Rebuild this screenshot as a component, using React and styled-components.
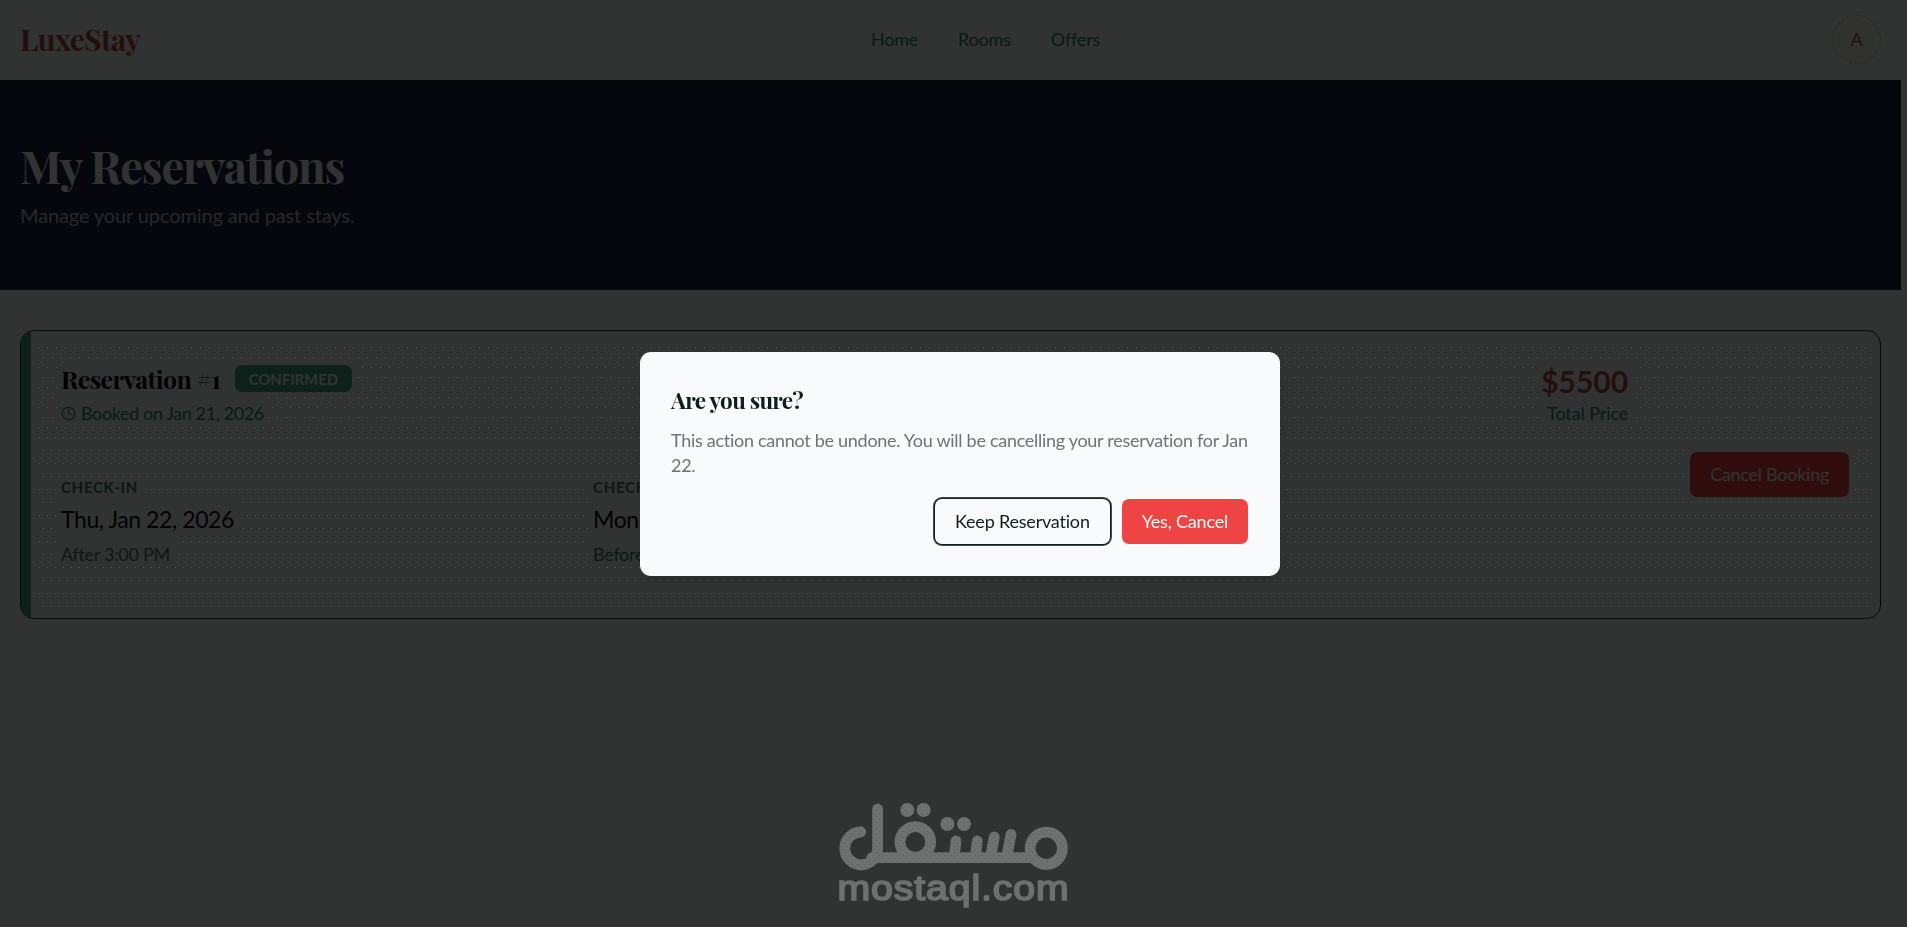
import React from 'react'
import styled, { createGlobalStyle } from 'styled-components'
import { Clock } from 'lucide-react'

const App = () => {
  return (
    <>
      <GlobalStyle />
      <Page>
        <Header>
          <Logo>LuxeStay</Logo>
          <Nav>
            <a>Home</a>
            <a>Rooms</a>
            <a>Offers</a>
          </Nav>
          <Avatar>A</Avatar>
        </Header>
        <Hero>
          <h1>My Reservations</h1>
          <p>Manage your upcoming and past stays.</p>
        </Hero>
        <Card>
          <StatusBar />
          <Details>
            <Top>
              <div>
                <TitleRow>
                  <h2>Reservation #1</h2>
                  <Badge>CONFIRMED</Badge>
                </TitleRow>
                <Booked>
                  <Clock size={15} strokeWidth={2} />
                  Booked on Jan 21, 2026
                </Booked>
              </div>
              <Price>
                <strong>$5500</strong>
                <span>Total Price</span>
              </Price>
            </Top>
            <Stay>
              <StayItem label='CHECK-IN' date='Thu, Jan 22, 2026' note='After 3:00 PM' />
              <StayItem label='CHECK-OUT' date='Mon, Jan 26, 2026' note='Before 11:00 AM' />
            </Stay>
          </Details>
          <Actions>
            <Button $danger $spacing='-0.27px'>
              Cancel Booking
            </Button>
          </Actions>
        </Card>
      </Page>
      <Overlay>
        <Grain />
        <Dialog>
          <h2>Are you sure?</h2>
          <p>
            This action cannot be undone. You will be cancelling your reservation for Jan 22.
          </p>
          <DialogFooter>
            <Button $focused>Keep Reservation</Button>
            <Button $danger>Yes, Cancel</Button>
          </DialogFooter>
        </Dialog>
      </Overlay>
      <Watermark>
        <WatermarkLogo />
      </Watermark>
    </>
  )
}

const StayItem = ({ label, date, note }) => (
  <StayBlock>
    <h4>{label}</h4>
    <strong>{date}</strong>
    <span>{note}</span>
  </StayBlock>
)

const WatermarkLogo = () => (
  <svg width='230' height='108' viewBox='0 0 230 108'>
    <defs>
      <pattern id='grain' width='6' height='6' patternUnits='userSpaceOnUse'>
        <rect width='6' height='6' fill='#6f7170' />
        <rect x='1' y='1' width='1' height='1' fill='#5c5e5d' />
        <rect x='4' y='4' width='1' height='1' fill='#5c5e5d' />
      </pattern>
    </defs>
    <g fill='none' stroke='url(#grain)' strokeWidth='10.8' strokeLinecap='round'>
      <path d='M21.8 29A16.400 16.400 0 1 0 38.600 45.200V6' />
      <path d='M33 54.600H192' />
      <circle cx='76.300' cy='39' r='15.300' />
      <circle cx='207.300' cy='45.300' r='16.100' />
      <path d='M117 38L115.500 52M138.300 38L136.500 52M155.300 34L152 52M172 31.500L168 52' />
    </g>
    <g fill='url(#grain)'>
      <circle cx='68.300' cy='7' r='7' />
      <circle cx='84.600' cy='7' r='7' />
      <circle cx='108.400' cy='21' r='7' />
      <circle cx='125' cy='21' r='7' />
      <text
        x='-1.500'
        y='96.500'
        textLength='232'
        lengthAdjust='spacingAndGlyphs'
        letterSpacing='0.8'
        fontFamily='"Liberation Sans", sans-serif'
        fontSize='35.500'
        stroke='#6f7170'
        strokeWidth='1.700'
        strokeLinejoin='round'
      >
        mostaql.com
      </text>
    </g>
  </svg>
)

export default App

const serif = '"Playfair Display", "Liberation Serif", serif'

const GlobalStyle = createGlobalStyle`
  * {
    box-sizing: border-box;
    margin: 0;
  }

  body {
    background: #f5fffa;
    color: #0c0d18;
    font: 18px/27px Lato, sans-serif;
    letter-spacing: -0.3px;
    overflow: hidden;
  }
`

const Page = styled.div`
  height: 927px;
  background: #f5fffa;
`

const Header = styled.header`
  display: flex;
  justify-content: space-between;
  align-items: center;
  height: 80px;
  padding: 0 26px 2px 20px;
`

const Logo = styled.div`
  font: bold 30px/40px ${serif};
  letter-spacing: -0.025em;
  color: #b44a40;
`

const Nav = styled.nav`
  display: flex;
  gap: 40px;
  padding-right: 1px;
  letter-spacing: -0.2px;
  color: #2f7d65;
`

const Avatar = styled.div`
  display: flex;
  align-items: center;
  justify-content: center;
  width: 49px;
  height: 49px;
  border: 1px dashed #c8bfbc;
  border-radius: 50%;
  background: #f2f2ee;
  color: #b44a40;
`

const Hero = styled.section`
  width: 1901px;
  height: 210px;
  padding: 58px 20px 0;
  background: #1e2340;
  color: #f5fffa;

  h1 {
    font: bold 45px/54px ${serif};
    letter-spacing: -0.025em;
  }
  p {
    margin-top: 8px;
    font-size: 20px;
    line-height: 30px;
    letter-spacing: -0.12px;
    color: #b9c8c6;
  }
`

const Card = styled.article`
  display: flex;
  width: 1861px;
  height: 289px;
  margin: 40px 20px 0;
  border: 1px solid #1e2340;
  border-radius: 14px;
  overflow: hidden;
`

const StatusBar = styled.div`
  width: 10px;
  background: #3fa583;
`

const Details = styled.div`
  flex: 1;
  padding: 31px 31px 0 30px;
`

const Top = styled.div`
  display: flex;
  justify-content: space-between;
`

const TitleRow = styled.div`
  display: flex;
  align-items: center;
  gap: 15px;
  height: 32px;

  h2 {
    padding-top: 2px;
    font: bold 25px/32px ${serif};
    letter-spacing: -0.025em;
  }
`

const Badge = styled.span`
  height: 27px;
  padding: 0 13.5px;
  border-radius: 7px;
  background: #3fa583;
  color: #f5fffa;
  font-weight: 700;
  font-size: 15px;
  line-height: 28px;
  letter-spacing: -0.1px;
`

const Booked = styled.div`
  display: flex;
  align-items: center;
  gap: 5px;
  margin-top: 6px;
  letter-spacing: -0.38px;
  color: #2f7d65;
`

const Price = styled.div`
  display: flex;
  flex-direction: column;
  padding-top: 1px;
  text-align: right;
  color: #2f7d65;

  strong {
    font-size: 30px;
    line-height: 36px;
    letter-spacing: 0;
    color: #b44a40;
  }
  span {
    margin-top: 1px;
    letter-spacing: -0.1px;
  }
`

const Stay = styled.div`
  display: grid;
  grid-template-columns: 1fr 1fr 1fr;
  gap: 29px;
  margin-top: 48px;
`

const StayBlock = styled.div`
  display: flex;
  flex-direction: column;
  color: #2f7d65;

  h4 {
    font-size: 15px;
    line-height: 24px;
    letter-spacing: 0.7px;
  }
  strong {
    margin-top: 5px;
    color: #0c0d18;
    font-weight: 400;
    font-size: 23px;
    line-height: 30px;
    letter-spacing: -0.42px;
  }
  span {
    margin-top: 7px;
  }
`

const Actions = styled.div`
  display: flex;
  align-items: center;
  padding: 0 31px;
`

const Button = styled.button`
  height: 45px;
  padding: 0 20px;
  border: 0;
  border-radius: 7px;
  background: ${props => (props.$danger ? '#ef4444' : '#f8fafc')};
  color: ${props => (props.$danger ? '#f8fafc' : '#0f1f1c')};
  font: 18px/27px Lato, sans-serif;
  letter-spacing: ${props => props.$spacing || '-0.2px'};
  white-space: nowrap;
  ${props => props.$focused && 'box-shadow: 0 0 0 1px #10241f, 0 0 0 2px #4a4648;'}
`

const Overlay = styled.div`
  position: fixed;
  inset: 0;
  display: flex;
  justify-content: center;
  align-items: flex-start;
  padding: 352px 0 0 13px;
  background: rgba(0, 0, 0, 0.8);
`

const dot = 'radial-gradient(circle at 0.5px 0.5px, rgba(255, 255, 255, 0.2) 0.5px, transparent 0.9px)'

// fine dot texture over the dimmed card, with holes where the texts and the button are
const Grain = styled.div`
  position: absolute;
  left: 38px;
  top: 347px;
  width: 1835px;
  height: 268px;
  clip-path: path(
    evenodd,
    'M0 0H1835V268H0Z M20 16H318V48H230V76H20Z M20 130H108V155H202V190H140V218H20Z M550 130H610V218H550Z M1500 16H1594V76H1500Z M1648 101H1815V154H1648Z'
  );

  &::before,
  &::after {
    content: '';
    display: block;
    height: 90px;
    background: ${dot} 0 0 / 9px 20px, ${dot} 5px 10px / 9px 20px;
  }
  &::after {
    height: 178px;
    background: ${dot} 1px 0 / 8px 26px, ${dot} 5px 13px / 8px 26px;
  }
`

const Dialog = styled.div`
  position: relative;
  width: 640px;
  height: 224px;
  padding: 32px 30px 0 31px;
  border-radius: 11px;
  background: #f8fafc;
  box-shadow: 0 8px 12px -4px rgba(0, 0, 0, 0.14);

  h2 {
    font: bold 22.5px/32px ${serif};
    letter-spacing: -0.03em;
    color: #0f1f1c;
  }
  p {
    margin-top: 12px;
    color: #71717a;
    letter-spacing: -0.285px;
    line-height: 25px;
  }
`

const DialogFooter = styled.div`
  display: flex;
  justify-content: flex-end;
  gap: 12px;
  margin: 21px 2px 0 0;
`

const Watermark = styled.div`
  position: fixed;
  left: 839px;
  top: 803px;

  svg {
    display: block;
    overflow: visible;
  }
`
